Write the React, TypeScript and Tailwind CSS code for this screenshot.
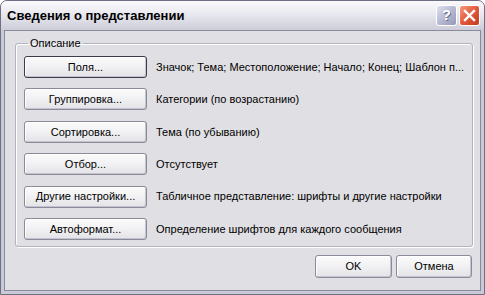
import React from "react"

// Строки группы "Описание"
const rows = [
  { label: "Поля...", text: "Значок; Тема; Местоположение; Начало; Конец; Шаблон п...", focused: true },
  { label: "Группировка...", text: "Категории (по возрастанию)" },
  { label: "Сортировка...", text: "Тема (по убыванию)" },
  { label: "Отбор...", text: "Отсутствует" },
  { label: "Другие настройки...", text: "Табличное представление: шрифты и другие настройки" },
  { label: "Автоформат...", text: "Определение шрифтов для каждого сообщения" },
]

const XpButton = ({ label, focused, className = "" }: { label: string; focused?: boolean; className?: string }) => (
  <button
    className={`flex items-center justify-center rounded-[3px] border bg-gradient-to-b from-[#fbfbfb] via-[#f1f1f3] to-[#e3e3e8] text-[11px] text-black shadow-[inset_-1px_-1px_0_#c4c4cf,inset_1px_1px_0_#ffffff] ${
      focused ? "border-[#3d3d4a]" : "border-[#8a8b99]"
    } ${className}`}
  >
    {label}
  </button>
)

export default function App() {
  return (
    <div
      className="flex h-[295px] w-[485px] flex-col overflow-hidden rounded-t-[7px] border border-[#6f6f84] bg-[#c9c9d7]"
      style={{ fontFamily: '"Liberation Sans", Arial, sans-serif' }}
    >
      {/* Заголовок окна */}
      <div className="flex h-[29px] shrink-0 items-center justify-between bg-gradient-to-b from-[#fbfbfd] via-[#e6e6ee] to-[#cdcdd9] pl-[6px] pr-[4px]">
        <span className="text-[13px] font-bold text-black">Сведения о представлении</span>
        <div className="flex gap-[2px]">
          <div className="flex h-[21px] w-[21px] items-center justify-center rounded-[3px] border border-white bg-gradient-to-br from-[#dfe1ee] via-[#b6bad2] to-[#9499b8] text-[14px] font-bold text-white [text-shadow:1px_1px_0_#6d7290]">
            ?
          </div>
          <div className="flex h-[21px] w-[21px] items-center justify-center rounded-[3px] border border-white bg-gradient-to-br from-[#f39a7e] via-[#e2593b] to-[#c23b20]">
            <svg width="13" height="13" viewBox="0 0 13 13">
              <path d="M2 2 L11 11 M11 2 L2 11" stroke="#ffffff" strokeWidth="2.4" strokeLinecap="square" />
            </svg>
          </div>
        </div>
      </div>

      {/* Клиентская область */}
      <div className="mx-[3px] mb-[3px] flex flex-1 flex-col border border-[#8a8a9e] bg-[#e0dfe3] text-[11px] text-black">
        <fieldset className="ml-[10px] mt-[6px] w-[456px] rounded-[3px] border border-[#b2b2c0] px-[8px] pb-[6px] pt-[6px] shadow-[inset_1px_1px_0_#ffffff,1px_1px_0_#ffffff]">
          <legend className="ml-[4px] px-[2px] leading-[13px]">Описание</legend>
          <div className="flex flex-col gap-[10.4px]">
            {rows.map((row) => (
              <div key={row.label} className="flex items-center gap-[9px]">
                <XpButton label={row.label} focused={row.focused} className="h-[22px] w-[123px] shrink-0" />
                <span className="whitespace-nowrap">{row.text}</span>
              </div>
            ))}
          </div>
        </fieldset>

        <div className="mt-[8px] flex justify-end gap-[4px] pr-[8px]">
          <XpButton label="OK" className="h-[23px] w-[77px]" />
          <XpButton label="Отмена" className="h-[23px] w-[76px]" />
        </div>
      </div>
    </div>
  )
}
